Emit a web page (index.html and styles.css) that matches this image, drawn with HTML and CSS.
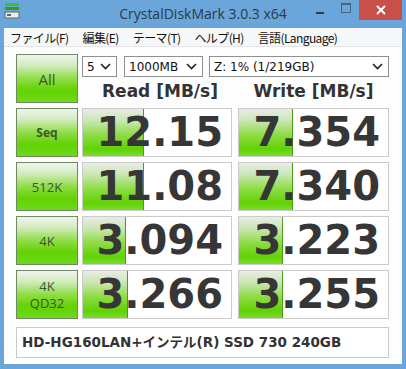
FILE: index.html
```html
<!DOCTYPE html>
<html>
<head>
  <title>CrystalDiskMark 3.0.3 x64</title>
  <link rel="stylesheet" href="styles.css">
</head>
<body>
  <div class="window">
    <div class="titlebar">
      <div class="app-icon">
        <svg width="16" height="17" viewBox="0 0 16 17">
          <rect x="1" y="1" width="14" height="3" fill="#3fbf2a"/>
          <rect x="1" y="5" width="14" height="3" fill="#2ea01e"/>
          <rect x="1" y="10" width="14" height="6" fill="#e9ecef" stroke="#5d6670"/>
          <rect x="3" y="12" width="4" height="2" fill="#5d6670"/>
        </svg>
      </div>
      <div class="title">CrystalDiskMark 3.0.3 x64</div>
      <div class="controls">
        <span class="ctl ctl-min"><i></i></span>
        <span class="ctl ctl-max"><i></i></span>
        <span class="ctl ctl-close">
          <svg width="10" height="10" viewBox="0 0 10 10">
            <path d="M1 1 L9 9 M9 1 L1 9" stroke="#fff" stroke-width="2"/>
          </svg>
        </span>
      </div>
    </div>

    <div class="menubar">
      <span class="menu-item">ファイル(F)</span>
      <span class="menu-item">編集(E)</span>
      <span class="menu-item">テーマ(T)</span>
      <span class="menu-item">ヘルプ(H)</span>
      <span class="menu-item">言語(Language)</span>
    </div>

    <div class="client">
      <div class="top">
        <div class="btn btn-all">All</div>
        <div class="top-right">
          <div class="selects">
            <div class="select sel-count"><span>5</span><svg class="chev" width="11" height="7" viewBox="0 0 11 7"><path d="M1 1 L5.5 5.5 L10 1" fill="none" stroke="#222" stroke-width="1.6"/></svg></div>
            <div class="select sel-size"><span>1000MB</span><svg class="chev" width="11" height="7" viewBox="0 0 11 7"><path d="M1 1 L5.5 5.5 L10 1" fill="none" stroke="#222" stroke-width="1.6"/></svg></div>
            <div class="select sel-drive"><span>Z: 1% (1/219GB)</span><svg class="chev" width="11" height="7" viewBox="0 0 11 7"><path d="M1 1 L5.5 5.5 L10 1" fill="none" stroke="#222" stroke-width="1.6"/></svg></div>
          </div>
          <div class="heads">
            <div class="head">Read [MB/s]</div>
            <div class="head">Write [MB/s]</div>
          </div>
        </div>
      </div>

      <div class="row">
        <div class="btn btn-seq">Seq</div>
        <div class="cell"><div class="bar" style="width: 61px"></div><div class="num">12.15</div></div>
        <div class="cell"><div class="bar" style="width: 54px"></div><div class="num">7.354</div></div>
      </div>
      <div class="row">
        <div class="btn">512K</div>
        <div class="cell"><div class="bar" style="width: 61px"></div><div class="num">11.08</div></div>
        <div class="cell"><div class="bar" style="width: 54px"></div><div class="num">7.340</div></div>
      </div>
      <div class="row">
        <div class="btn">4K</div>
        <div class="cell"><div class="bar" style="width: 43px"></div><div class="num">3.094</div></div>
        <div class="cell"><div class="bar" style="width: 44px"></div><div class="num">3.223</div></div>
      </div>
      <div class="row">
        <div class="btn btn-two">4K<br>QD32</div>
        <div class="cell"><div class="bar" style="width: 45px"></div><div class="num">3.266</div></div>
        <div class="cell"><div class="bar" style="width: 44px"></div><div class="num">3.255</div></div>
      </div>

      <div class="drive-name">HD-HG160LAN+インテル(R) SSD 730 240GB</div>
    </div>
  </div>
</body>
</html>
```

FILE: styles.css
```css
body {
  margin: 0;
  background: #6aa6da;
  font-family: "DejaVu Sans", "Noto Sans CJK JP", sans-serif;
}
.window {
  width: 406px;
  height: 369px;
  box-sizing: border-box;
  padding: 0 4px 5px 4px;
  background: #6aa6da;
}
.titlebar {
  height: 28px;
  display: grid;
  grid-template-columns: 1fr auto 1fr;
  align-items: start;
  margin: 0 -4px;
}
.app-icon {
  padding: 2px 0 0 4px;
}
.title {
  font-family: "Open Sans", sans-serif;
  font-size: 14px;
  color: #2c3946;
  line-height: 27px;
}
.controls {
  display: flex;
  justify-content: flex-end;
  margin-right: 4px;
}
.ctl {
  width: 26px;
  height: 20px;
  display: flex;
  align-items: center;
  justify-content: center;
}
.ctl-min i {
  display: block;
  width: 8px;
  height: 2px;
  background: #2c3946;
  margin-top: 6px;
}
.ctl-max i {
  display: block;
  width: 8px;
  height: 7px;
  border: 1px solid #2c3946;
  border-top-width: 2px;
  margin-top: -4px;
  opacity: 0.6;
}
.ctl-close {
  width: 43px;
  background: #c9504a;
}
.menubar {
  height: 18px;
  background: #f6f7f8;
  border-bottom: 1px solid #e4e6e8;
  display: flex;
  align-items: center;
  padding-left: 6px;
  font-family: "Noto Sans CJK JP", sans-serif;
  font-size: 12px;
  color: #111;
}
.menu-item {
  margin-right: 14px;
  letter-spacing: -0.6px;
}
.client {
  background: #fdfdfd;
  height: 317px;
  padding: 7px 0 0 12px;
  box-sizing: border-box;
}
.top {
  display: flex;
  height: 49px;
}
.btn {
  width: 62px;
  height: 49px;
  box-sizing: border-box;
  border: 1px solid #6f8a63;
  background: linear-gradient(#f0f3ee 0%, #d3ecc0 22%, #8fdd47 50%, #62d203 75%, #6ed81a 100%);
  display: flex;
  align-items: center;
  justify-content: center;
  text-align: center;
  font-family: "Open Sans", sans-serif;
  font-size: 13px;
  color: #3b5530;
}
.btn-all {
  font-size: 15px;
}
.btn-seq {
  font-weight: bold;
  font-size: 12px;
}
.btn-two {
  line-height: 17px;
}
.top-right {
  margin-left: 4px;
  width: 307px;
}
.selects {
  display: flex;
  margin-top: 2px;
  height: 21px;
}
.select {
  box-sizing: border-box;
  height: 21px;
  border: 1px solid #8e8f8f;
  background: #fff;
  display: flex;
  align-items: center;
  justify-content: space-between;
  padding: 0 5px 0 4px;
  font-size: 12px;
  color: #111;
}
.sel-count { width: 35px; }
.sel-size { width: 79px; margin-left: 7px; }
.sel-drive { width: 180px; margin-left: 6px; }
.heads {
  display: grid;
  grid-template-columns: 156px 151px;
  margin-top: 3px;
}
.head {
  text-align: center;
  font-weight: bold;
  font-size: 17px;
  color: #333;
  line-height: 22px;
}
.row {
  display: grid;
  grid-template-columns: 66px 156px 151px;
  margin-top: 5px;
  height: 49px;
}
.cell {
  width: 150px;
  height: 49px;
  box-sizing: border-box;
  border: 1px solid #cacaca;
  background: #fff;
  display: grid;
  overflow: hidden;
}
.row .cell + .cell {
  width: 151px;
}
.bar, .num {
  grid-area: 1 / 1;
}
.bar {
  justify-self: start;
  height: 100%;
  box-sizing: border-box;
  border-right: 1px solid #4c9a1e;
  background: linear-gradient(#e9ede6 0%, #c9e6b3 25%, #8edc45 55%, #60d204 85%, #7adc2a 100%);
}
.num {
  justify-self: end;
  align-self: center;
  padding-right: 8px;
  font-weight: bold;
  font-size: 40px;
  color: #363636;
  line-height: 47px;
}
.drive-name {
  margin-top: 8px;
  width: 373px;
  height: 31px;
  box-sizing: border-box;
  border: 1px solid #cacaca;
  background: #fff;
  padding-left: 5px;
  font-weight: bold;
  font-size: 13.5px;
  color: #333;
  line-height: 29px;
}
```
